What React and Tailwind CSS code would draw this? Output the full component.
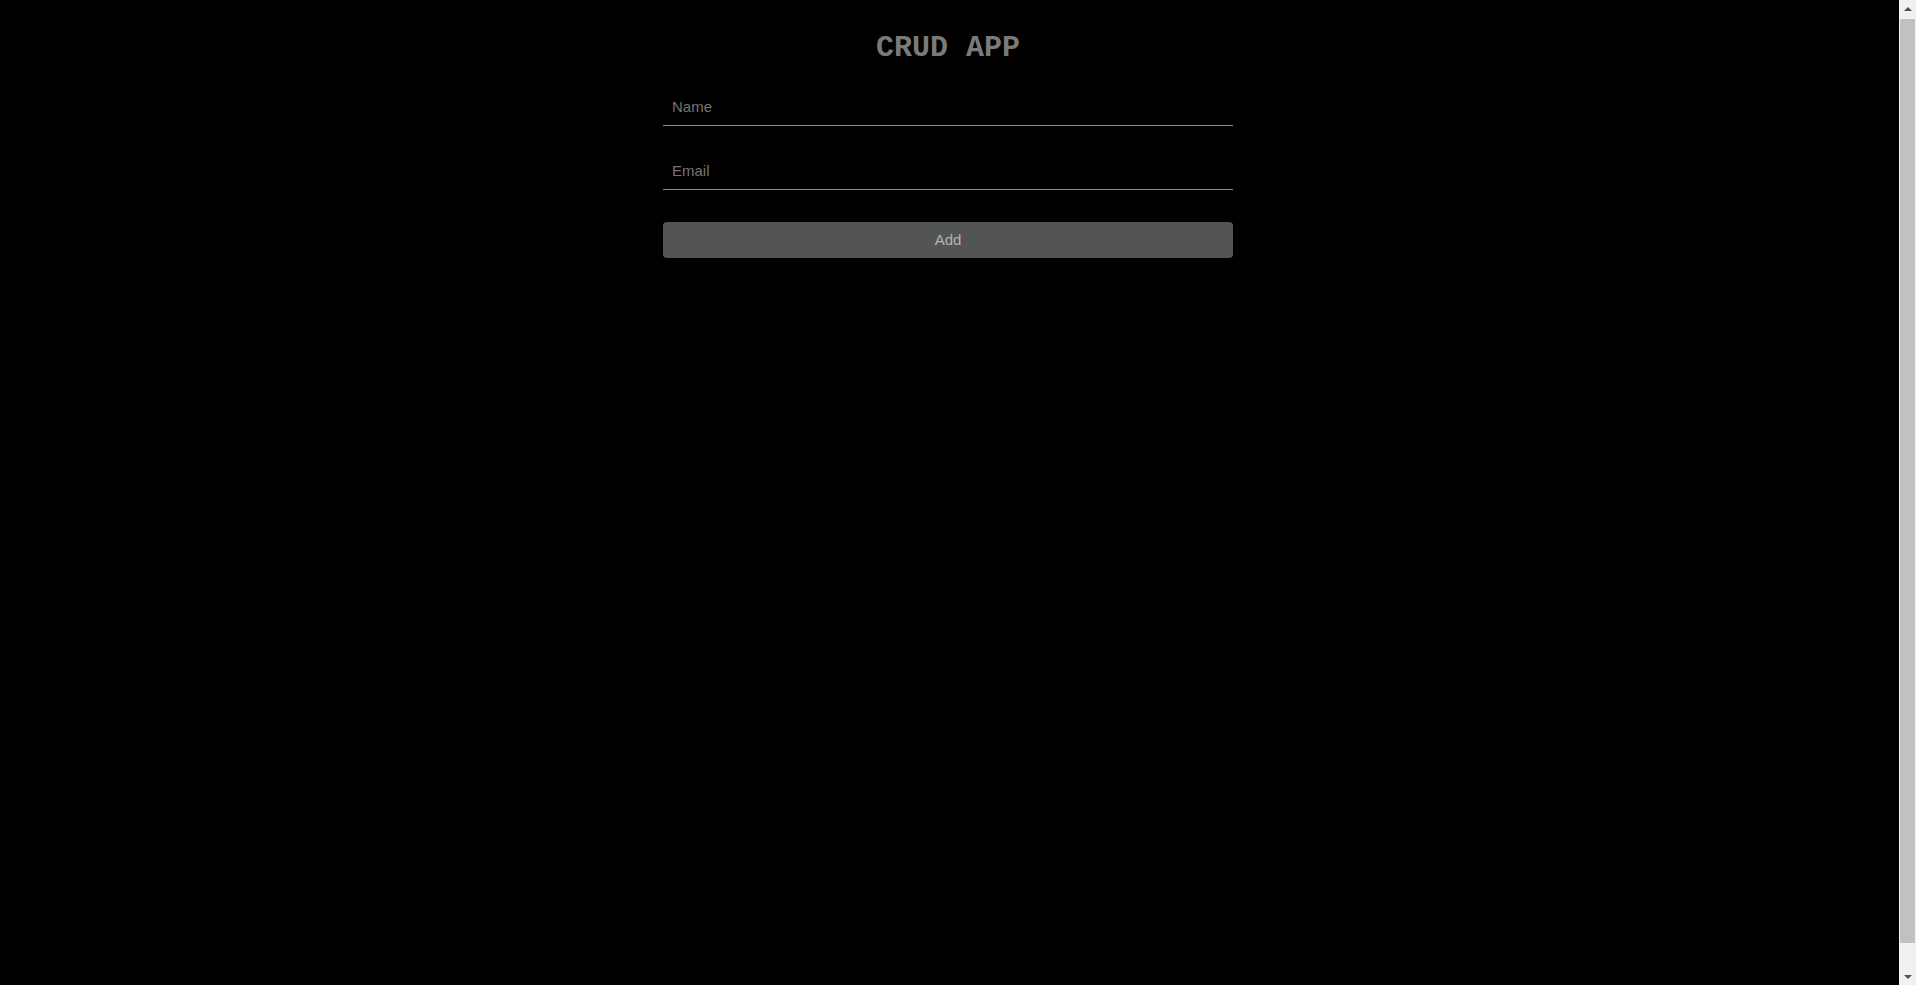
import React, { useState } from 'react';

const App = () => {
  const [name, setName] = useState('');
  const [email, setEmail] = useState('');
  const [users, setUsers] = useState([]);

  const handleAdd = (e) => {
    e.preventDefault();
    if (!name || !email) return;
    setUsers(prev => [...prev, { id: Date.now(), name, email }]);
    setName('');
    setEmail('');
  };

  return (
    <div className="flex h-screen bg-black font-['Liberation_Sans',Arial,sans-serif]">
      <main className="flex-1 overflow-hidden pr-[3px]">
        <div className="mx-auto w-[570px] pt-[30px]">
          {/* 제목 */}
          <h1 className="h-9 text-center font-['Liberation_Mono','Courier_New',monospace] text-[30px] font-bold leading-[36px] text-[#7a7a7a]">
            CRUD APP
          </h1>

          <form onSubmit={handleAdd} className="mt-[20px] flex flex-col">
            <input
              type="text"
              placeholder="Name"
              value={name}
              onChange={(e) => setName(e.target.value)}
              className="w-full border-b border-[#8a8a8a] bg-transparent pl-[9px] pt-[12px] pb-[10px] text-[15px] leading-[17px] text-[#bdbdbd] placeholder:text-[#757575] focus:outline-none"
            />
            <input
              type="email"
              placeholder="Email"
              value={email}
              onChange={(e) => setEmail(e.target.value)}
              className="mt-6 w-full border-b border-[#8a8a8a] bg-transparent pl-[9px] pt-[12px] pb-[10px] text-[15px] leading-[17px] text-[#bdbdbd] placeholder:text-[#757575] focus:outline-none"
            />
            <button
              type="submit"
              className="mt-8 h-9 w-full rounded-[4px] bg-[#535554] text-[15px] text-[#b3b3b3] hover:bg-[#5e605f]"
            >
              Add
            </button>
          </form>

          {/* 목록 */}
          {users.length > 0 && (
            <ul className="mt-6 space-y-2 text-[15px] text-[#b3b3b3]">
              {users.map(u => (
                <li key={u.id} className="flex justify-between border-b border-[#333] pb-2">
                  <span>{u.name}</span>
                  <span>{u.email}</span>
                </li>
              ))}
            </ul>
          )}
        </div>
      </main>

      {/* 스크롤바 */}
      <aside className="flex w-[17px] flex-col bg-[#f1f1f1]">
        <div className="flex h-[17px] items-center justify-center">
          <div className="h-0 w-0 border-x-[4px] border-b-[4px] border-x-transparent border-b-[#505050]" />
        </div>
        <div className="flex-1 px-[1px]">
          <div className="mt-[2px] h-[924px] bg-[#c1c1c1]" />
        </div>
        <div className="flex h-[17px] items-center justify-center">
          <div className="h-0 w-0 border-x-[4px] border-t-[4px] border-x-transparent border-t-[#505050]" />
        </div>
      </aside>
    </div>
  );
};

export default App;
